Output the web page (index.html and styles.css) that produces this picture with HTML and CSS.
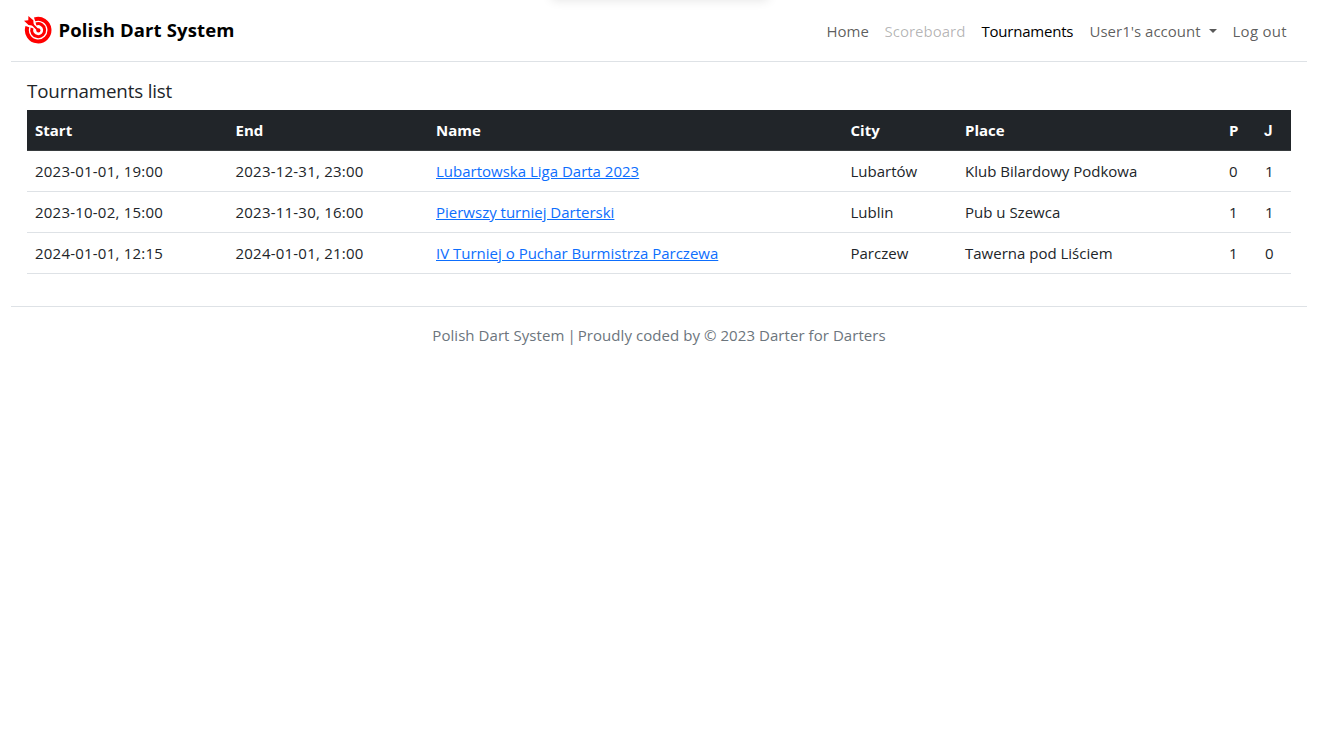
FILE: index.html
```html
<!DOCTYPE html>
<html lang="en">
<head>
<meta charset="utf-8">
<title>Polish Dart System</title>
<link rel="stylesheet" href="styles.css">
</head>
<body>
<div class="top-shadow"></div>
<div class="page">
  <header class="navbar">
    <a class="brand" href="#">
      <svg class="logo" viewBox="0 0 28 28" aria-hidden="true">
        <g fill="none" stroke="#f00">
          <path stroke-width="4" d="M10.6 3.4A11.3 11.3 0 1 1 3.4 10.7"/>
          <path stroke-width="3" d="M12 8A6.5 6.5 0 1 1 8 12"/>
          <path stroke-width="2" d="M6 6L15 15"/>
        </g>
        <circle cx="14.4" cy="14.4" r="2.1" fill="#f00"/>
        <path fill="#f00" d="M4.4 0L9.3 4.2L9.8 9.8L4.5 9L0 4.8L4.3 4.3Z"/>
      </svg>
      <span>Polish Dart System</span>
    </a>
    <nav class="menu">
      <a class="home" href="#">Home</a>
      <a class="scoreboard disabled" href="#">Scoreboard</a>
      <a class="tournaments active" href="#">Tournaments</a>
      <a class="account" href="#">User1's account<i class="caret"></i></a>
      <a class="logout" href="#">Log out</a>
    </nav>
  </header>
  <main>
    <h1>Tournaments list</h1>
    <table>
      <colgroup><col class="c-date"><col class="c-date"><col class="c-name"><col class="c-city"><col class="c-place"><col class="c-p"><col></colgroup>
      <thead>
        <tr><th>Start</th><th>End</th><th>Name</th><th>City</th><th>Place</th><th>P</th><th class="j-head">J</th></tr>
      </thead>
      <tbody>
        <tr><td class="date">2023-01-01, 19:00</td><td class="date">2023-12-31, 23:00</td><td><a href="#">Lubartowska Liga Darta 2023</a></td><td>Lubartów</td><td>Klub Bilardowy Podkowa</td><td>0</td><td>1</td></tr>
        <tr><td class="date">2023-10-02, 15:00</td><td class="date">2023-11-30, 16:00</td><td><a href="#">Pierwszy turniej Darterski</a></td><td>Lublin</td><td>Pub u Szewca</td><td>1</td><td>1</td></tr>
        <tr><td class="date">2024-01-01, 12:15</td><td class="date">2024-01-01, 21:00</td><td><a href="#">IV Turniej o Puchar Burmistrza Parczewa</a></td><td>Parczew</td><td>Tawerna pod Liściem</td><td>1</td><td>0</td></tr>
      </tbody>
    </table>
  </main>
  <footer>Polish Dart System<span class="bar"> | </span>Proudly coded by © 2023 Darter for Darters</footer>
</div>
</body>
</html>
```

FILE: styles.css
```css
* { box-sizing: border-box; }
body {
  margin: 0;
  background: #fff;
  color: #212529;
  font: 15px/24px "Open Sans", "Noto Sans", sans-serif;
  overflow: hidden;
}
.top-shadow {
  position: absolute;
  top: -11px;
  left: 552px;
  width: 216px;
  height: 10px;
  box-shadow: 0 0 12px rgba(0, 0, 0, .14);
}
.page { width: 1296px; margin-left: 11px; }
.navbar {
  display: flex;
  justify-content: space-between;
  height: 62px;
  padding: 0 18.5px 0 13px;
  border-bottom: 1px solid #dee2e6;
}
.brand {
  display: flex;
  align-items: center;
  gap: 6.5px;
  padding-bottom: 2px;
  color: #000;
  font-size: 18.5px;
  font-weight: 700;
  letter-spacing: .13px;
  text-decoration: none;
}
.logo { width: 28px; height: 28px; }
.menu { display: flex; align-items: center; gap: 16px; }
.menu a { color: rgba(0, 0, 0, .65); text-decoration: none; white-space: nowrap; }
.menu a.disabled { color: rgba(0, 0, 0, .3); }
.menu a.active { color: #000; }
.home { width: 42px; }
.scoreboard { width: 81px; }
.tournaments { width: 92px; letter-spacing: -.22px; }
.account { width: 127px; display: flex; align-items: center; justify-content: space-between; }
.logout { width: 56px; letter-spacing: .28px; }
.caret { border-top: 4px solid; border-left: 4px solid transparent; border-right: 4px solid transparent; }
main { padding: 17px 16px 32px; }
h1 { margin: 0 0 7px; font-size: 18.75px; line-height: 24px; font-weight: 400; letter-spacing: -.16px; }
table { width: 100%; table-layout: fixed; border-collapse: separate; border-spacing: 0; }
.c-date { width: 200.5px; }
.c-name { width: 414.5px; }
.c-city { width: 114.5px; }
.c-place { width: 264px; }
.c-p { width: 36px; }
th, td { padding: 8px; text-align: left; border-bottom: 1px solid #dee2e6; white-space: nowrap; }
th { background: #212529; color: #fff; border-bottom-color: #373b3e; }
.j-head { padding: 9px 7px 7px; font-family: Roboto, sans-serif; }
.date { letter-spacing: .22px; }
td a { color: #0d6efd; }
footer { padding-top: 16px; border-top: 1px solid #dee2e6; text-align: center; color: #6c757d; letter-spacing: .06px; }
.bar { letter-spacing: -.9px; }
```
